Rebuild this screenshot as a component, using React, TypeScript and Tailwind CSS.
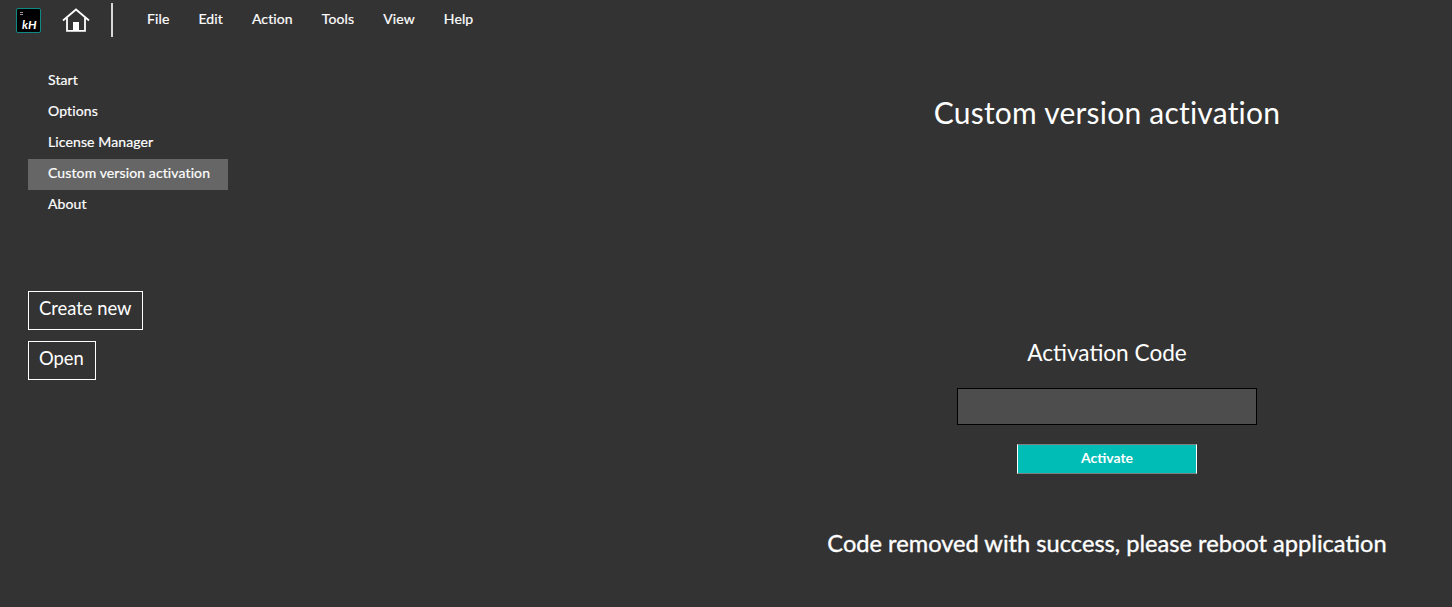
import React from "react";

function Logo() {
  return (
    <div className="relative w-[25px] h-[25px] bg-black border border-[#0e8a86] rounded-[2px] shrink-0 mt-[2px]">
      <div className="absolute left-[3px] top-[3px] w-[3px] h-[3px] border-y border-[#9a9a9a]" />
      <span className="absolute left-[5px] top-[8px] text-[12px] leading-[15px] italic font-bold text-white">kH</span>
    </div>
  );
}

function Home() {
  return (
    <svg width="28" height="24" viewBox="0 0 28 24" className="shrink-0 block mt-[2px]" fill="none">
      <path d="M1 12.5 L14 1.5 L27 12.5" stroke="#fff" strokeWidth="1.8" />
      <path d="M5 10 V22.8 H23 V10" stroke="#fff" strokeWidth="1.8" />
      <rect x="11" y="14" width="6" height="9" fill="#fff" />
    </svg>
  );
}

export default function App() {
  const menu = ["File", "Edit", "Action", "Tools", "View", "Help"];
  const side = ["Start", "Options", "License Manager", "Custom version activation", "About"];
  return (
    <div className="w-[1452px] h-[607px] overflow-hidden bg-[#333333] text-white font-['Lato',sans-serif] flex flex-col">
      <header className="h-[38px] flex items-center pl-[16px] shrink-0">
        <Logo />
        <div className="ml-[21px]"><Home /></div>
        <div className="ml-[21px] mt-[2px] w-[2px] h-[34px] bg-[#d8d8d8]" />
        <nav className="ml-[34px] pb-[1px] flex gap-[29px] text-[14px] tracking-[0.12px] [-webkit-text-stroke:0.2px_white]">
          {menu.map((m) => <span key={m}>{m}</span>)}
        </nav>
      </header>
      <div className="flex flex-1">
        <aside className="w-[762px] pl-[28px] pt-[28px] shrink-0">
          <ul className="w-[200px] text-[14px] tracking-[0.12px] [-webkit-text-stroke:0.2px_white]">
            {side.map((s) => (
              <li key={s} className={"h-[31px] flex items-center pl-[20px] pb-[4px] " + (s === "Custom version activation" ? "bg-[#666666]" : "")}>{s}</li>
            ))}
          </ul>
          <div className="mt-[70px] flex flex-col items-start gap-[11px] text-[18.4px]">
            <button className="h-[39px] px-[10px] pb-[3px] border border-white">Create new</button>
            <button className="h-[39px] pl-[10px] pr-[11px] pb-[3px] border border-white">Open</button>
          </div>
        </aside>
        <main className="flex-1 flex flex-col items-center">
          <h1 className="mt-[53px] text-[30px] tracking-[0.22px] leading-[42px] font-normal">Custom version activation</h1>
          <h2 className="mt-[205px] text-[22.6px] leading-[30px] font-normal">Activation Code</h2>
          <input className="mt-[20px] w-[300px] h-[37px] bg-[#4d4d4d] border border-black outline-none" />
          <button className="mt-[19px] w-[180px] h-[30px] pb-[4px] bg-[#00bdb6] border border-white border-y-[#808080] text-[14px] font-bold">Activate</button>
          <p className="mt-[53px] text-[23.65px] leading-[32px] whitespace-nowrap [-webkit-text-stroke:0.35px_white]">Code removed with success, please reboot application</p>
        </main>
      </div>
    </div>
  );
}
